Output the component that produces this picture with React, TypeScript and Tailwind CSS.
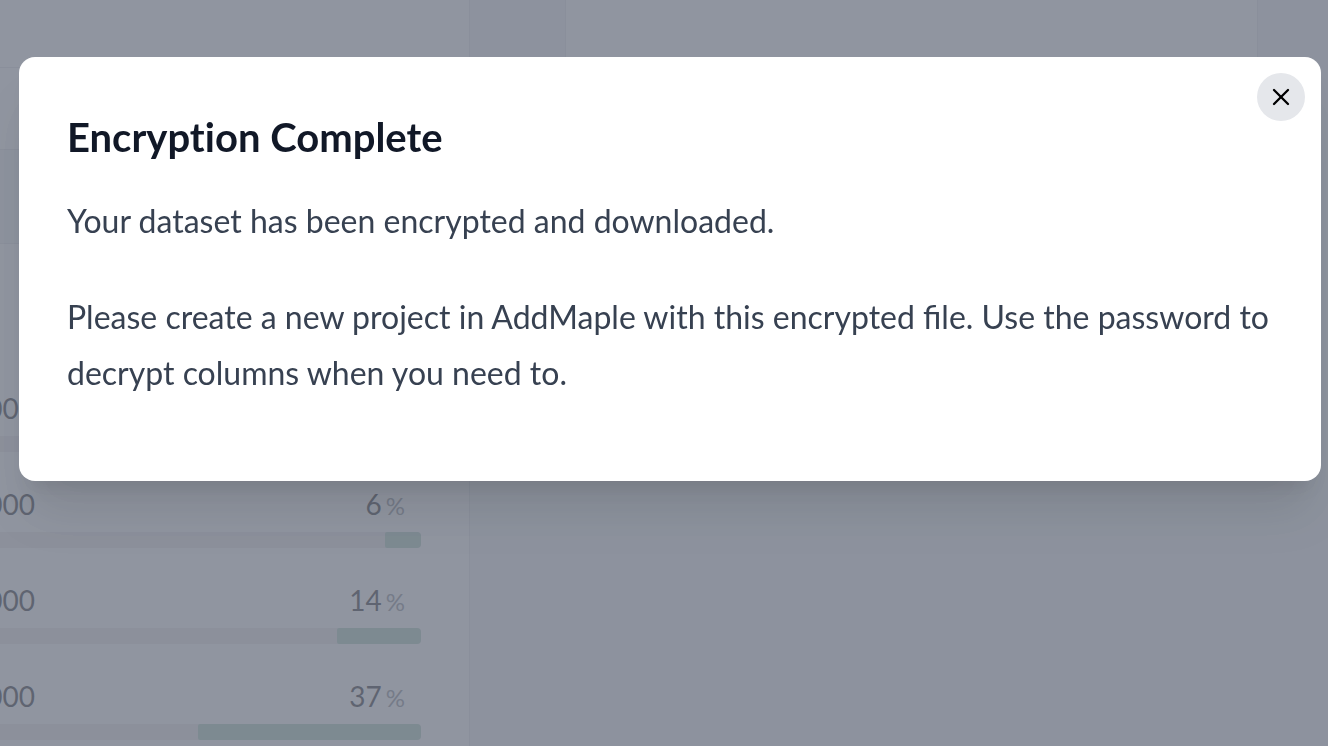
import React from "react";
import { X } from "lucide-react";

interface BarRowProps {
  label: string;
  value: number;
}

const rows: BarRowProps[] = [
  { label: "1,000", value: 4 },
  { label: "5,000", value: 6 },
  { label: "10,000", value: 14 },
  { label: "50,000", value: 37 },
];

function BarRow({ label, value }: Readonly<BarRowProps>) {
  return (
    <li>
      <div className="flex justify-between pr-4 text-[28px] leading-10 text-[#3f3f46]">
        <span className="flex w-[35px] justify-end overflow-hidden">{label}</span>
        <span>
          {value}
          <span className="ml-1 text-2xl text-[#94989f]">%</span>
        </span>
      </div>
      <div className="flex justify-end h-4 mt-2 overflow-hidden rounded-r-sm bg-[#eeeaec]">
        <div
          className="h-full rounded-xs bg-[#b4d2c4]"
          style={{ width: `${(value * 10) / 7}%` }}
        />
      </div>
    </li>
  );
}

function Background() {
  return (
    <div className="flex items-start h-screen overflow-hidden bg-[#f3f4f6]" aria-hidden="true">
      <aside className="w-[470px] min-h-screen shrink-0 bg-white border-r border-gray-200">
        <div className="h-[68px] border-b border-gray-200" />
        <div className="h-[82px] border-b border-gray-200" />
        <div className="h-[94px] bg-[#f3f4f6] border-b border-gray-200" />
        <ul className="flex flex-col gap-8 pr-12 mt-36">
          {rows.map((row) => (
            <BarRow key={row.label} {...row} />
          ))}
        </ul>
      </aside>
      <main className="flex-1 h-96 ml-[95px] mr-[70px] bg-white border-x border-gray-200" />
    </div>
  );
}

function Modal() {
  return (
    <div
      role="dialog"
      aria-modal="true"
      aria-labelledby="modal-title"
      className="relative w-full p-12 bg-white rounded-2xl shadow-[0_40px_50px_-10px_rgba(0,0,0,0.1),0_16px_20px_-12px_rgba(0,0,0,0.1)]"
    >
      <button
        type="button"
        aria-label="Close"
        className="absolute top-4 right-4 flex items-center justify-center w-12 h-12 text-black bg-[#e5e7eb] rounded-full"
      >
        <X className="w-7 h-7" />
      </button>
      <h1
        id="modal-title"
        className="text-[40px] leading-16 font-bold text-[#111827] [font-variant-ligatures:none]"
      >
        Encryption Complete
      </h1>
      <div className="flex flex-col gap-10 pb-8 mt-6 text-[32px] leading-14 text-[#374151]">
        <p>Your dataset has been encrypted and downloaded.</p>
        <p>
          Please create a new project in AddMaple with this encrypted file. Use the
          password to decrypt columns when you need to.
        </p>
      </div>
    </div>
  );
}

export default function App() {
  return (
    <div className="font-['Lato',sans-serif]">
      <Background />
      <div className="fixed inset-0 bg-[#6b7280]/75" />
      <div className="fixed inset-0 flex items-start pt-[57px] pl-[19px] pr-[7px]">
        <Modal />
      </div>
    </div>
  );
}
